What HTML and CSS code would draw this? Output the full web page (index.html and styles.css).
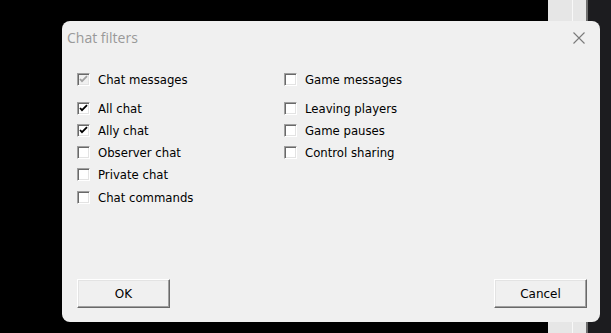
FILE: index.html
```html
<!DOCTYPE html>
<html lang="en">
<head>
  <meta charset="UTF-8">
  <title>Chat filters</title>
  <link rel="stylesheet" href="styles.css">
</head>
<body>
  <div class="backwin">
    <div class="backwin-line"></div>
  </div>

  <div class="dialog">
    <div class="titlebar">
      <span class="title">Chat filters</span>
      <svg class="close" width="12" height="12" viewBox="0 0 12 12">
        <path d="M0.5 0.5 L11.5 11.5 M11.5 0.5 L0.5 11.5" stroke="#7a7a7a" stroke-width="1.1" fill="none"/>
      </svg>
    </div>

    <div class="body">
      <div class="columns">
        <div class="col col-left">
          <label class="row head disabled">
            <span class="box"><svg width="11" height="11" viewBox="0 0 11 11"><path d="M2 5 L4 7.2 L9 2.2" /></svg></span>
            <span class="text">Chat messages</span>
          </label>
          <label class="row">
            <span class="box"><svg width="11" height="11" viewBox="0 0 11 11"><path d="M2 5 L4 7.2 L9 2.2" /></svg></span>
            <span class="text">All chat</span>
          </label>
          <label class="row">
            <span class="box"><svg width="11" height="11" viewBox="0 0 11 11"><path d="M2 5 L4 7.2 L9 2.2" /></svg></span>
            <span class="text">Ally chat</span>
          </label>
          <label class="row"><span class="box"></span><span class="text">Observer chat</span></label>
          <label class="row"><span class="box"></span><span class="text">Private chat</span></label>
          <label class="row"><span class="box"></span><span class="text">Chat commands</span></label>
        </div>

        <div class="col">
          <label class="row head"><span class="box"></span><span class="text">Game messages</span></label>
          <label class="row"><span class="box"></span><span class="text">Leaving players</span></label>
          <label class="row"><span class="box"></span><span class="text">Game pauses</span></label>
          <label class="row"><span class="box"></span><span class="text">Control sharing</span></label>
        </div>
      </div>

      <div class="actions">
        <button class="btn">OK</button>
        <button class="btn">Cancel</button>
      </div>
    </div>
  </div>
</body>
</html>
```

FILE: styles.css
```css
html, body {
  margin: 0;
  height: 100%;
}
body {
  background: #000;
  font-family: "DejaVu Sans", sans-serif;
  font-size: 11.7px;
  overflow: hidden;
  position: relative;
}

/* window behind the dialog */
.backwin {
  position: absolute;
  left: 548px;
  top: 0;
  width: 38px;
  height: 100%;
  background: #e6e6e6;
  border-right: 2px solid #6e6e6e;
}
.backwin-line {
  margin-left: 24px;
  width: 1px;
  height: 100%;
  background: #f8f8f8;
}
body::after {
  content: "";
  position: absolute;
  left: 588px;
  top: 0;
  right: 0;
  bottom: 0;
  background: #1c1c1f;
}

.dialog {
  position: absolute;
  left: 62px;
  top: 21px;
  width: 538px;
  height: 301px;
  background: #f0f0f0;
  border-radius: 8px;
  display: flex;
  flex-direction: column;
  z-index: 1;
}
.titlebar {
  height: 32px;
  display: flex;
  align-items: center;
  justify-content: space-between;
  padding: 0 15px 0 5px;
}
.title {
  font-family: "Open Sans", sans-serif;
  font-size: 14px;
  color: #999;
}
.close {
  margin-top: 2px;
}

.body {
  flex: 1;
  display: flex;
  flex-direction: column;
  padding: 15px 13px 14px 15px;
}
.columns {
  display: flex;
}
.col {
  display: flex;
  flex-direction: column;
}
.col-left {
  width: 207px;
}
.row {
  height: 22.2px;
  display: flex;
  align-items: center;
  gap: 8px;
  color: #000;
}
.row.head {
  margin-bottom: 7px;
}
.text {
  padding-top: 1px;
}

.box {
  width: 13px;
  height: 13px;
  box-sizing: border-box;
  background: #fff;
  border: 1px solid;
  border-color: #a0a0a0 #fff #fff #a0a0a0;
  box-shadow: inset 1px 1px 0 #696969, inset -1px -1px 0 #e3e3e3;
  display: flex;
  align-items: center;
  justify-content: center;
}
.box svg path {
  fill: none;
  stroke: #000;
  stroke-width: 1.8;
}
.disabled .box {
  background: #f0f0f0;
}
.disabled .box svg path {
  stroke: #a0a0a0;
}

.actions {
  margin-top: auto;
  display: flex;
  justify-content: space-between;
}
.btn {
  width: 93px;
  height: 29px;
  font-family: "DejaVu Sans", sans-serif;
  font-size: 12px;
  color: #000;
  background: #f0f0f0;
  border: 1px solid;
  border-color: #fff #696969 #696969 #fff;
  box-shadow: inset -1px -1px 0 #a0a0a0, inset 1px 1px 0 #e3e3e3;
  padding: 0;
  margin: 0;
}
```
